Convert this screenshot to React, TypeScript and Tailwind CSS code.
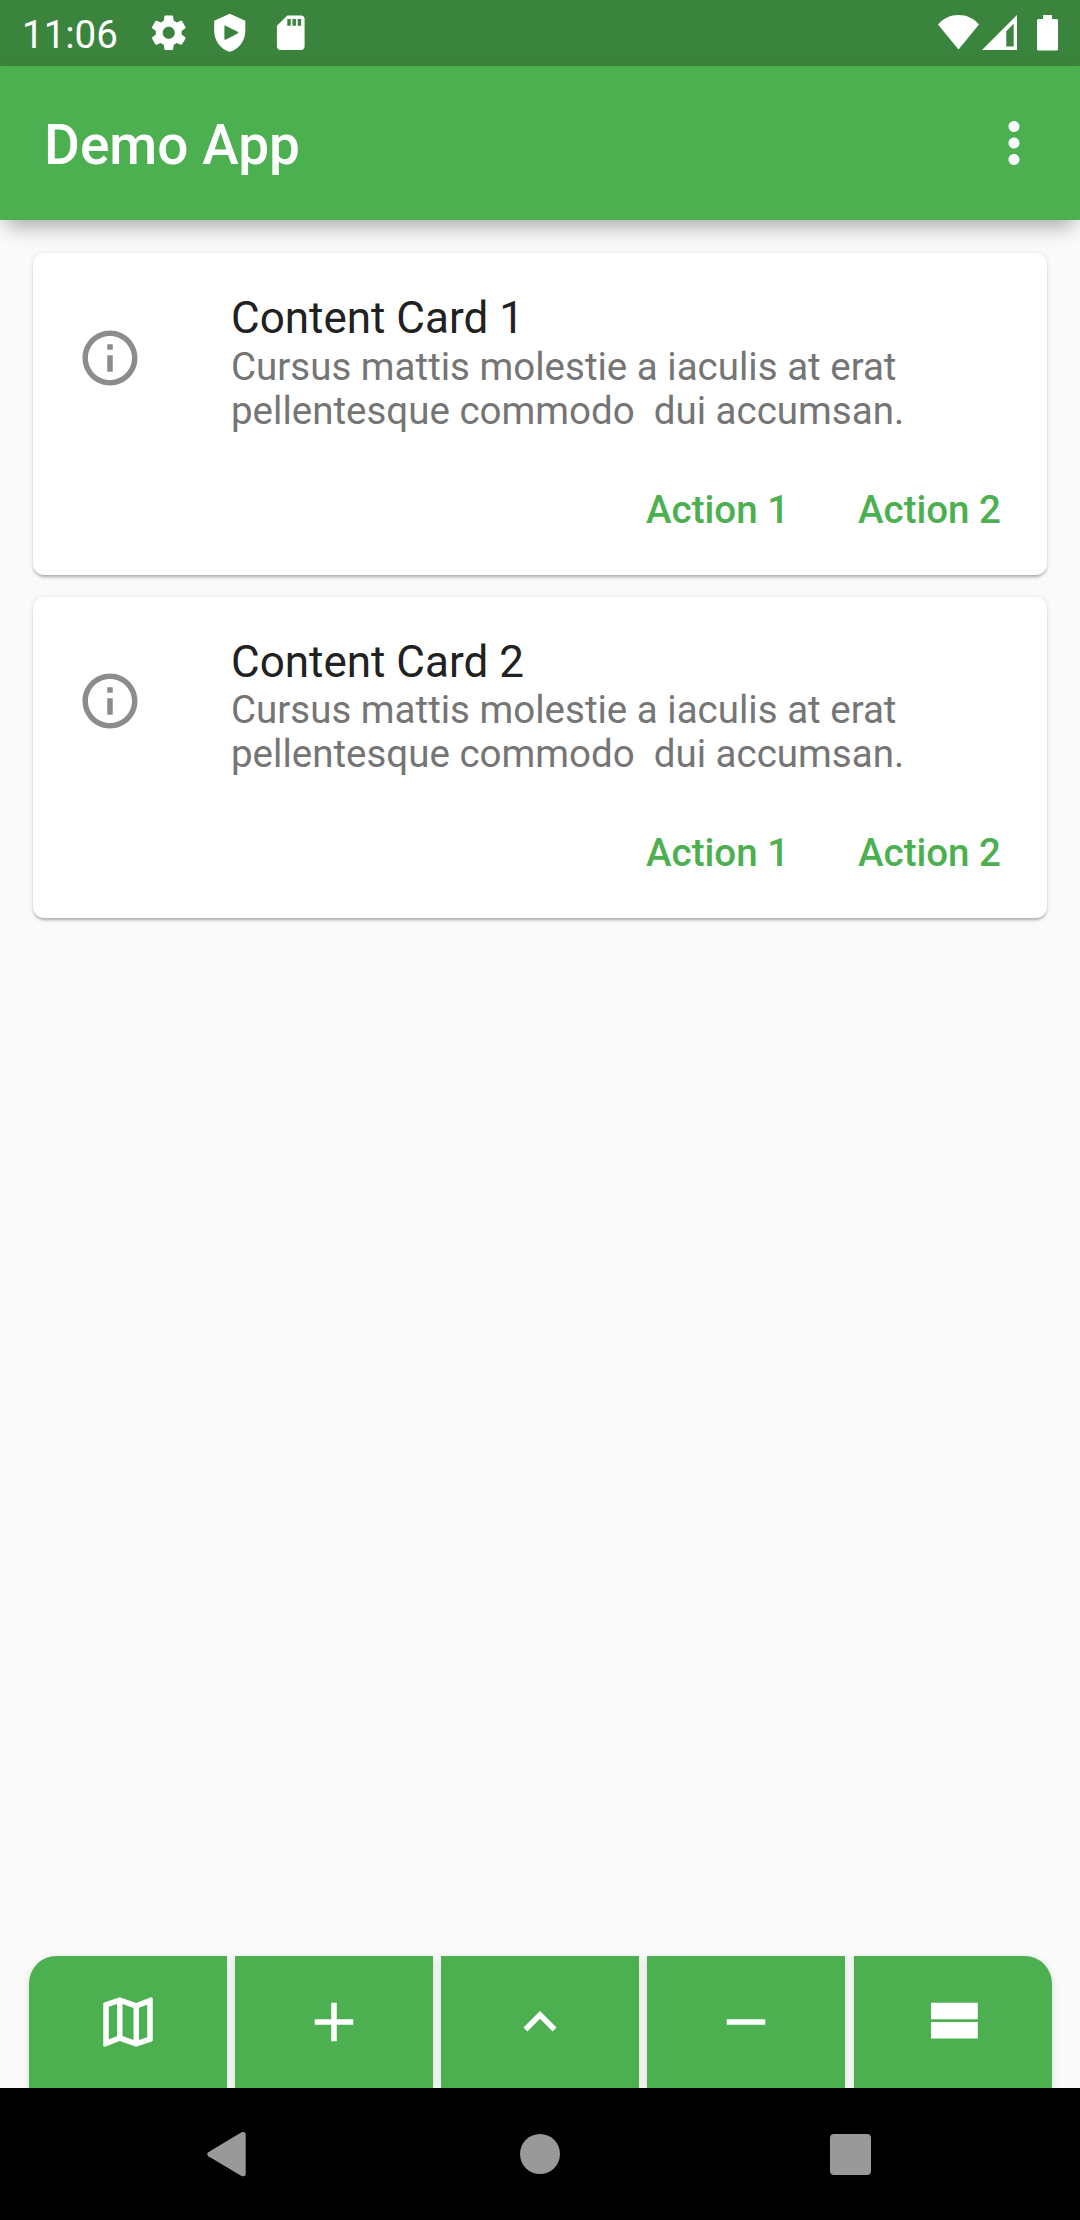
import type { ReactNode } from "react";

const PATHS = {
  settings:
    "M19.43 12.98c.04-.32.07-.64.07-.98s-.03-.66-.07-.98l2.11-1.65c.19-.15.24-.42.12-.64l-2-3.46c-.12-.22-.39-.3-.61-.22l-2.49 1c-.52-.4-1.08-.73-1.69-.98l-.38-2.65C14.46 2.18 14.25 2 14 2h-4c-.25 0-.46.18-.49.42l-.38 2.65c-.61.25-1.17.59-1.69.98l-2.49-1c-.23-.09-.49 0-.61.22l-2 3.46c-.13.22-.07.49.12.64l2.11 1.65c-.04.32-.07.65-.07.98s.03.66.07.98l-2.11 1.65c-.19.15-.24.42-.12.64l2 3.46c.12.22.39.3.61.22l2.49-1c.52.4 1.08.73 1.69.98l.38 2.65c.03.24.24.42.49.42h4c.25 0 .46-.18.49-.42l.38-2.65c.61-.25 1.17-.59 1.69-.98l2.49 1c.23.09.49 0 .61-.22l2-3.46c.12-.22.07-.49-.12-.64l-2.11-1.65zM12 15.5c-1.93 0-3.5-1.57-3.5-3.5s1.57-3.5 3.5-3.5 3.5 1.57 3.5 3.5-1.57 3.5-3.5 3.5z",
  sdCard:
    "M18 2h-8L4 8v12c0 1.1.9 2 2 2h12c1.1 0 2-.9 2-2V4c0-1.1-.9-2-2-2zm-6 6h-2V4h2v4zm3 0h-2V4h2v4zm3 0h-2V4h2v4z",
  moreVert:
    "M12 8c1.1 0 2-.9 2-2s-.9-2-2-2-2 .9-2 2 .9 2 2 2zm0 2c-1.1 0-2 .9-2 2s.9 2 2 2 2-.9 2-2-.9-2-2-2zm0 6c-1.1 0-2 .9-2 2s.9 2 2 2 2-.9 2-2-.9-2-2-2z",
  info: "M11 7h2v2h-2zm0 4h2v6h-2zm1-9C6.48 2 2 6.48 2 12s4.48 10 10 10 10-4.48 10-10S17.52 2 12 2zm0 18c-4.41 0-8-3.59-8-8s3.59-8 8-8 8 3.59 8 8-3.59 8-8 8z",
  map: "M20.5 3l-.16.03L15 5.1 9 3 3.36 4.9c-.21.07-.36.25-.36.48V20.5c0 .28.22.5.5.5l.16-.03L9 18.9l6 2.1 5.64-1.9c.21-.07.36-.25.36-.48V3.5c0-.28-.22-.5-.5-.5zM10 5.47l4 1.4v11.66l-4-1.4V5.47zm-5 .99l3-1.01v11.7l-3 1.16V6.46zm14 11.08l-3 1.01V6.86l3-1.16v11.84z",
  add: "M19 13h-6v6h-2v-6H5v-2h6V5h2v6h6v2z",
  expandLess: "M12 8l-6 6 1.41 1.41L12 10.83l4.59 4.58L18 14z",
  remove: "M19 13H5v-2h14v2z",
  viewStream: "M4 18h17v-6H4v6zM4 5v6h17V5H4z",
};

function Icon({ path, className }: { path: string; className: string }) {
  return (
    <svg viewBox="0 0 24 24" fill="currentColor" className={className}>
      <path d={path} />
    </svg>
  );
}

function StatusBar() {
  return (
    <div className="flex h-[66px] items-center justify-between bg-[#3b843d] pr-[20px] pl-[22px] text-white">
      <div className="flex items-center">
        <span className="w-[126px] pt-[3px] text-[38.5px] leading-[66px]">11:06</span>
        <Icon path={PATHS.settings} className="h-[41.5px] w-[41.5px]" />
        <svg viewBox="0 0 24 24" fill="currentColor" className="ml-[19px] h-[41.5px] w-[41.5px]">
          <path
            fillRule="evenodd"
            d="M12 1 3 5v6c0 5.55 3.84 10.74 9 12 5.16-1.26 9-6.45 9-12V5l-9-4zM9.6 7.9l7 3.5q.8.5 0 1l-7 3.6q-.7.2-.7-.6V8.5q0-.8.7-.6z"
          />
        </svg>
        <Icon path={PATHS.sdCard} className="ml-[20px] h-[41.5px] w-[41.5px]" />
      </div>
      <svg viewBox="0 0 122 40" fill="currentColor" className="h-[40px] w-[122px]">
        <path d="M0 11.5C5.5 5.2 12.5 2 20.5 2S35.5 5.2 41 11.5L20.5 36.5z" />
        <path fillRule="evenodd" d="M44 37 79 2V37zM68.3 33.5H75.7V10.7L68.3 18.2z" />
        <path d="M105 2h9v4h4.5a1.5 1.5 0 0 1 1.5 1.5v28.5a1.5 1.5 0 0 1-1.5 1.5h-18a1.5 1.5 0 0 1-1.5-1.5V7.5a1.5 1.5 0 0 1 1.5-1.5h4.5z" />
      </svg>
    </div>
  );
}

function AppBar() {
  return (
    <header className="flex h-[154px] items-center justify-between bg-[#4caf50] pr-[33px] pl-[44px] text-white shadow-[0_15px_18px_-8px_rgba(0,0,0,0.25),0_6px_22px_0_rgba(0,0,0,0.08)]">
      <h1 className="pt-[4px] text-[55px] leading-[64px] font-medium">Demo App</h1>
      <Icon path={PATHS.moreVert} className="h-[66px] w-[66px]" />
    </header>
  );
}

function ContentCard({ title }: { title: string }) {
  return (
    <article className="flex h-[321.3px] flex-col rounded-[11px] bg-white shadow-[0_3px_3px_-1px_rgba(0,0,0,0.26),0_1px_5px_0_rgba(0,0,0,0.12)]">
      <div className="flex pt-[38.7px] pl-[44px]">
        <Icon path={PATHS.info} className="mt-[33px] h-[66px] w-[66px] text-[#8c8c8c]" />
        <div className="ml-[88px]">
          <h2 className="mt-[0.4px] text-[44px] leading-[52px] text-[#212121]">{title}</h2>
          <p className="mt-[0.6px] text-[38.5px] leading-[44px] whitespace-pre text-[#757575]">
            {"Cursus mattis molestie a iaculis at erat\npellentesque commodo  dui accumsan."}
          </p>
        </div>
      </div>
      <div className="mt-[54px] flex justify-end gap-[69px] pr-[46px] text-[38.5px] leading-[45px] font-medium text-[#4caf50]">
        <button>Action 1</button>
        <button>Action 2</button>
      </div>
    </article>
  );
}

function Tile({ path, className = "" }: { path: string; className?: string }) {
  return (
    <button
      className={`flex h-[132px] w-[198px] items-center justify-center bg-[#4caf50] text-white shadow-[0_2px_7px_0_rgba(0,0,0,0.14)] ${className}`}
    >
      <Icon path={path} className="h-[66px] w-[66px]" />
    </button>
  );
}

function NavSlot({ children, className = "" }: { children: ReactNode; className?: string }) {
  return <div className={`flex w-[310px] justify-center ${className}`}>{children}</div>;
}

function SystemNav() {
  return (
    <nav className="relative flex h-[132px] items-center justify-center bg-black text-[#999999]">
      <NavSlot className="pr-[7px]">
        <svg viewBox="0 0 42 46" fill="currentColor" className="h-[46px] w-[42px]">
          <path d="M2.3 21.2 35.5 1.3Q39.7-.2 39.7 3.8V42.5Q39.7 46.3 35.5 44.9L2.3 25.2Q.3 23.2 2.3 21.2z" />
        </svg>
      </NavSlot>
      <NavSlot>
        <div className="h-[40px] w-[40px] rounded-full bg-[#999999]" />
      </NavSlot>
      <NavSlot>
        <div className="h-[41px] w-[41px] rounded-[4px] bg-[#999999]" />
      </NavSlot>
    </nav>
  );
}

export default function App() {
  return (
    <div className="flex h-[2220px] w-[1080px] flex-col overflow-hidden bg-[#fafafa] font-['Roboto',sans-serif]">
      <StatusBar />
      <AppBar />
      <main className="flex flex-1 flex-col gap-[22px] px-[33px] pt-[33.3px]">
        <ContentCard title="Content Card 1" />
        <ContentCard title="Content Card 2" />
      </main>
      <div className="flex justify-center gap-[8.25px]">
        <Tile path={PATHS.map} className="rounded-tl-[27.5px]" />
        <Tile path={PATHS.add} />
        <Tile path={PATHS.expandLess} />
        <Tile path={PATHS.remove} />
        <Tile path={PATHS.viewStream} className="rounded-tr-[27.5px]" />
      </div>
      <SystemNav />
    </div>
  );
}
